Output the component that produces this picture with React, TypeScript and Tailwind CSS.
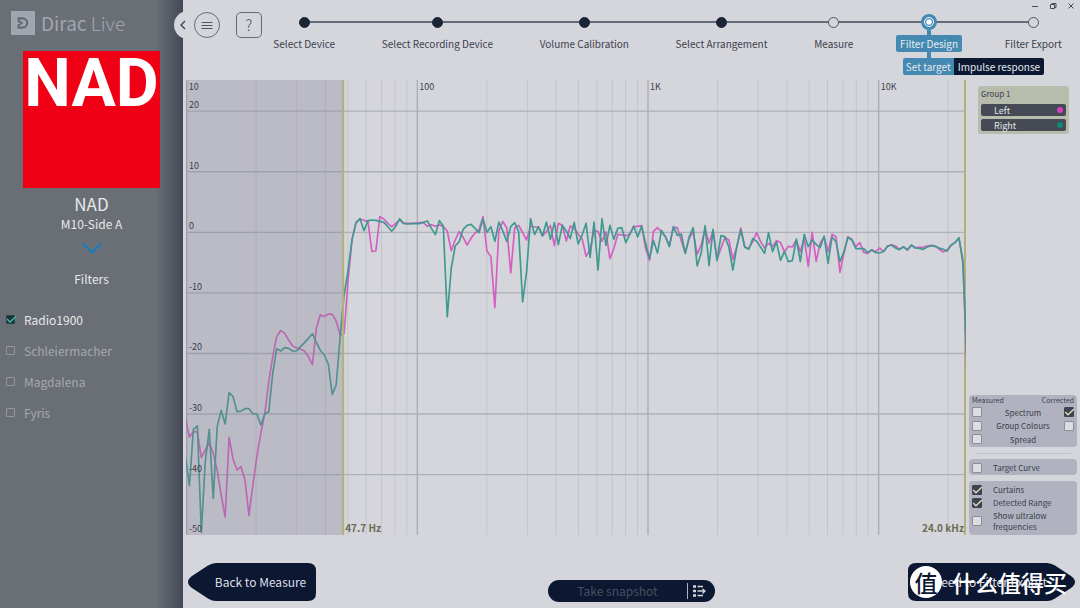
import { clsx } from "clsx"
import { useState } from "react"

const STEPS = [
	{ label: "Select Device", state: "done" },
	{ label: "Select Recording Device", state: "done" },
	{ label: "Volume Calibration", state: "done" },
	{ label: "Select Arrangement", state: "done" },
	{ label: "Measure", state: "open" },
	{ label: "Filter Design", state: "current" },
	{ label: "Filter Export", state: "open" },
]

const FILTERS = ["Radio1900", "Schleiermacher", "Magdalena", "Fyris"]

const CHANNELS = [
	{ label: "Left", dot: "bg-[#d63fc4]" },
	{ label: "Right", dot: "bg-[#0e8a75]" },
]

// Trace samples, evenly spaced on the log frequency axis, in plot units
const LEFT = [
	655, 711, 695, 696, 773, 750, 728, 760, 810, 885, 951, 712, 778, 810, 800,
	840, 946, 855, 770, 700, 640, 545, 470, 410, 391, 400, 420, 437, 444, 448,
	453, 470, 494, 385, 344, 350, 342, 343, 363, 405, 400, 240, 118, 68, 57, 61,
	64, 154, 153, 50, 57, 70, 80, 70, 60, 70, 70, 70, 69, 68, 68, 79, 74, 79,
	74, 80, 93, 152, 120, 95, 112, 135, 115, 99, 90, 50, 153, 170, 323, 92, 64,
	84, 219, 84, 76, 98, 120, 78, 81, 81, 107, 95, 76, 137, 70, 76, 123, 78, 85,
	102, 116, 169, 148, 92, 94, 124, 96, 176, 145, 103, 105, 107, 103, 80, 79,
	77, 145, 181, 94, 83, 96, 110, 136, 82, 83, 122, 160, 115, 96, 163, 135, 88,
	130, 92, 178, 145, 112, 120, 178, 140, 84, 140, 146, 125, 98, 125, 144, 130,
	140, 122, 127, 155, 139, 141, 120, 155, 115, 199, 97, 184, 130, 112, 155,
	103, 110, 217, 160, 110, 118, 140, 128, 157, 160, 149, 155, 144, 155, 138,
	134, 138, 148, 141, 149, 136, 143, 142, 141, 138, 136, 138, 147, 156, 150,
	137, 127, 115, 180, 520,
]

const RIGHT = [
	770, 857, 688, 678, 997, 785, 688, 895, 680, 631, 672, 578, 590, 635, 633,
	626, 626, 641, 642, 675, 642, 635, 520, 446, 453, 443, 445, 453, 453, 440,
	428, 415, 401, 427, 451, 465, 492, 583, 555, 408, 285, 210, 118, 68, 56, 92,
	62, 60, 61, 64, 67, 80, 94, 79, 56, 70, 72, 71, 71, 71, 67, 63, 85, 104, 62,
	78, 351, 205, 138, 125, 88, 76, 73, 85, 98, 57, 97, 80, 124, 66, 93, 124,
	80, 68, 95, 306, 215, 56, 104, 80, 108, 66, 118, 68, 134, 76, 93, 116, 67,
	132, 105, 70, 172, 66, 210, 56, 136, 76, 118, 85, 83, 128, 103, 78, 111, 78,
	130, 175, 122, 159, 91, 110, 140, 80, 106, 102, 160, 110, 83, 198, 160, 77,
	197, 88, 182, 107, 110, 142, 210, 140, 90, 142, 148, 116, 124, 142, 160, 98,
	155, 126, 181, 155, 185, 182, 117, 185, 103, 140, 120, 133, 143, 108, 190,
	111, 125, 185, 155, 112, 120, 146, 146, 146, 158, 150, 158, 159, 154, 139,
	135, 144, 149, 140, 150, 135, 144, 145, 148, 141, 137, 139, 144, 148, 153,
	135, 128, 113, 190, 480,
]

const PLOT_WIDTH = 2340
const PLOT_TOP = -360
const PLOT_HEIGHT = 1365

const freqToX = (freq: number) => 2 + 692 * Math.log10(freq / 10)
const dbToY = (db: number) => 97 - db * 18.17
const toPoints = (trace: number[]) =>
	trace.map((y, i) => `${(i * 11.9 - 1.6).toFixed(1)},${y}`).join(" ")

const leftPct = (freq: number) => `${(freqToX(freq) / PLOT_WIDTH) * 100}%`
const topPct = (db: number) =>
	`${((dbToY(db) - PLOT_TOP) / PLOT_HEIGHT) * 100}%`

const DECADES = [10, 100, 1000, 10000]
const MINOR_FREQS = DECADES.flatMap(d =>
	[2, 3, 4, 5, 6, 7, 8, 9].map(n => n * d)
).filter(f => f <= 20000)
const DB_LINES = [20, 10, 0, -10, -20, -30, -40]
const FREQ_LABELS = [
	{ freq: 10, text: "10" },
	{ freq: 100, text: "100" },
	{ freq: 1000, text: "1K" },
	{ freq: 10000, text: "10K" },
]

const Plot = () => {
	const curtain = freqToX(47.7)
	return (
		<section
			aria-label="Frequency response"
			className="relative h-[455px] min-w-0 flex-1 text-[9px] leading-3 text-[#3b404c]"
		>
			<svg
				viewBox={`0 ${PLOT_TOP} ${PLOT_WIDTH} ${PLOT_HEIGHT}`}
				preserveAspectRatio="none"
				className="block h-full w-full overflow-hidden"
				fill="none"
			>
				{MINOR_FREQS.map(f => (
					<path
						key={f}
						d={`M${freqToX(f)} ${PLOT_TOP}V1005`}
						stroke="#c3c4cb"
						strokeWidth="3"
					/>
				))}
				{DB_LINES.map(db => (
					<path
						key={db}
						d={`M0 ${dbToY(db)}H${PLOT_WIDTH}`}
						stroke="#aeb0bb"
						strokeWidth="4"
					/>
				))}
				{DECADES.map(f => (
					<path
						key={f}
						d={`M${freqToX(f)} ${PLOT_TOP}V1005`}
						stroke="#a9abb6"
						strokeWidth="4"
					/>
				))}
				<path
					d={`M2337 ${PLOT_TOP}V1005`}
					stroke="#b0b277"
					strokeWidth="6"
				/>
				<g strokeWidth="5" strokeLinejoin="round">
					<polyline points={toPoints(LEFT)} stroke="#d45fc0" />
					<polyline points={toPoints(RIGHT)} stroke="#3f998f" />
				</g>
				<rect
					y={PLOT_TOP}
					width={curtain}
					height={PLOT_HEIGHT}
					fill="#827f93"
					fillOpacity="0.3"
				/>
				<path
					d={`M${curtain} ${PLOT_TOP}V1005`}
					stroke="#b0b277"
					strokeWidth="6"
				/>
			</svg>
			{FREQ_LABELS.map(({ freq, text }) => (
				<span
					key={freq}
					className="absolute top-px ml-[2px]"
					style={{ left: leftPct(freq) }}
				>
					{text}
				</span>
			))}
			{[...DB_LINES, -50].map(db => (
				<span
					key={db}
					className="absolute left-[3px] -translate-y-full"
					style={{ top: topPct(db) }}
				>
					{db}
				</span>
			))}
			<span
				className="absolute bottom-0 ml-0.5 text-[10px] leading-3.5 font-bold text-[#6a6b52]"
				style={{ left: leftPct(47.7) }}
			>
				47.7 Hz
			</span>
			<span className="absolute right-0.5 bottom-0 text-[10px] leading-3.5 font-bold text-[#6a6b52]">
				24.0 kHz
			</span>
		</section>
	)
}

interface ICheck {
	label: string
	defaultChecked?: boolean
}

const Check: React.FC<ICheck> = ({ label, defaultChecked }) => (
	<span className="relative block size-[10px] shrink-0">
		<input
			type="checkbox"
			aria-label={label}
			defaultChecked={defaultChecked}
			className="peer block size-[10px] appearance-none rounded-[1px] border border-[#8b8e98] bg-[#dcdde1] checked:border-[#3f4350] checked:bg-[#3f4350]"
		/>
		<svg
			viewBox="0 0 10 10"
			className="pointer-events-none absolute inset-0 hidden size-[10px] overflow-visible peer-checked:block"
			fill="none"
			stroke="#e4dfc0"
			strokeWidth="1.3"
		>
			<path d="M1.2 5 4 7.8 10 2" />
		</svg>
	</span>
)

const OptionRow: React.FC<ICheck> = ({ label, defaultChecked }) => (
	<div className="flex items-center gap-[11px]">
		<Check label={label} defaultChecked={defaultChecked} />
		<span className="w-16">{label}</span>
	</div>
)

const SidePanel = () => (
	<aside className="mr-[3px] ml-[3px] flex w-[108px] shrink-0 flex-col text-[8px] leading-[11px] text-[#3b404c]">
		<div className="mt-1.5 mr-2 ml-[9px] rounded-[3px] bg-[#b8bcac] px-[3px] pt-[2px] pb-[3px]">
			<h2 className="mb-[5px]">Group 1</h2>
			<ul className="flex flex-col gap-[3px]">
				{CHANNELS.map(c => (
					<li
						key={c.label}
						className="flex h-3 items-center justify-between rounded-[2px] bg-[#454a55] pr-[3px] pl-[13px] text-[9px] text-[#e2e3e6]"
					>
						{c.label}
						<span className={clsx("size-1.5 rounded-full", c.dot)} />
					</li>
				))}
			</ul>
		</div>
		<div className="mt-auto rounded-[4px] bg-[#b0b3bf] px-[3px] pb-px">
			<div className="flex justify-between text-[7px] leading-[10px]">
				<span>Measured</span>
				<span>Corrected</span>
			</div>
			<div className="flex h-[14px] items-center justify-between">
				<Check label="Measured spectrum" />
				Spectrum
				<Check label="Corrected spectrum" defaultChecked />
			</div>
			<div className="flex h-[13px] items-center justify-between">
				<Check label="Measured group colours" />
				Group Colours
				<Check label="Corrected group colours" />
			</div>
			<div className="flex h-[14px] items-center justify-between">
				<Check label="Measured spread" />
				Spread
				<span className="w-[10px]" />
			</div>
		</div>
		<hr className="mx-1.5 mt-1.5 mb-[5px] border-[#bfc1ca]" />
		<div className="rounded-[4px] bg-[#b0b3bf] px-[3px] pt-[3px] pb-[2px]">
			<OptionRow label="Target Curve" />
		</div>
		<div className="mt-1.5 flex flex-col gap-[2px] rounded-[4px] bg-[#b0b3bf] px-[3px] py-[3px]">
			<OptionRow label="Curtains" defaultChecked />
			<OptionRow label="Detected Range" defaultChecked />
			<OptionRow label="Show ultralow frequencies" />
		</div>
	</aside>
)

const Sidebar = () => {
	const [selected, setSelected] = useState("Radio1900")
	return (
		<aside className="w-[183px] shrink-0 bg-[#6a6e75] bg-linear-to-r from-transparent from-85% to-[#434856] pt-[11px] text-[#e8e9eb]">
			<div className="ml-[11px] flex h-6 items-center gap-1.5 text-[#a1a5b0]">
				<svg viewBox="0 0 24 24" className="size-6">
					<path d="M0 0h24v24H0z" fill="#a1a5b0" />
					<path
						d="M6.5 7.3H11.500a4.700 4.700 0 0 1 0 9.400H6.500M7.700 8v2.200L10.500 12 7.700 13.800V16"
						fill="none"
						stroke="#666a73"
						strokeWidth="2.200"
					/>
				</svg>
				<span className="text-[19px] leading-6">
					Dirac <span className="font-light">Live</span>
				</span>
			</div>
			<div className="mx-[23px] mt-4 flex h-[137px] justify-center bg-[#f00015] font-[Roboto,sans-serif] text-[66px] leading-[66px] font-bold text-white">
				NAD
			</div>
			<div className="text-center">
				<h1 className="mt-1 text-[17px] leading-[23px]">NAD</h1>
				<p className="text-[12px] leading-[18px]">M10-Side A</p>
				<button
					type="button"
					aria-label="Show devices"
					className="mx-auto mt-[9px] block"
				>
					<svg viewBox="0 0 20 12" className="h-3 w-5">
						<path
							d="M1 1.500 10 10.500 19 1.500"
							fill="none"
							stroke="#0f7fbf"
							strokeWidth="2"
						/>
					</svg>
				</button>
				<h2 className="mt-4 text-[12px] leading-[18px]">Filters</h2>
			</div>
			<ul className="mt-4">
				{FILTERS.map(name => (
					<li key={name} className="h-[31px]">
						<label
							className={clsx(
								"flex h-[31px] items-center gap-2 pl-1.5 text-[12px] leading-5",
								name === selected
									? "text-[#e8e9eb]"
									: "text-[#a5a8b0]"
							)}
						>
							<span className="relative block size-[10px]">
								<input
									type="checkbox"
									checked={name === selected}
									onChange={() => setSelected(name)}
									className="peer block size-[9px] appearance-none rounded-[1px] border border-[#9497a0] checked:border-[#1f4a50] checked:bg-[#20303c]"
								/>
								<svg
									viewBox="0 0 10 10"
									className="pointer-events-none absolute inset-0 hidden size-[10px] overflow-visible peer-checked:block"
									fill="none"
									stroke="#43c0a0"
									strokeWidth="1.300"
								>
									<path d="M1 4 4 7 10 1.500" />
								</svg>
							</span>
							{name}
						</label>
					</li>
				))}
			</ul>
		</aside>
	)
}

const StepDot = ({ state }: { state: string }) => {
	if (state === "current")
		return (
			<svg viewBox="0 0 16 16" className="relative size-4">
				<circle cx="8" cy="8" r="8" fill="#4489b1" />
				<circle cx="8" cy="8" r="4.500" fill="none" stroke="#fff" />
				<circle cx="8" cy="8" r="2.800" fill="#fff" />
			</svg>
		)
	return (
		<span
			className={clsx(
				"relative size-[11px] rounded-full border",
				state === "done"
					? "border-[#1c2536] bg-[#1c2536]"
					: "border-[#50555f] bg-[#d5d6dc]"
			)}
		/>
	)
}

const Stepper = () => (
	<nav aria-label="Progress" className="ml-[11px] flex-1 pt-[14px]">
		<ol className="flex gap-[46px] text-[10px] leading-[17px] whitespace-nowrap">
			{STEPS.map((step, idx) => (
				<li
					key={step.label}
					className="relative flex flex-auto flex-col items-center"
				>
					<span
						className={clsx(
							"absolute top-[7px] h-0.5 bg-[#666c77]",
							idx === 0 ? "left-1/2" : "-left-[23px]",
							idx === STEPS.length - 1
								? "right-1/2"
								: "-right-[23px]"
						)}
					/>
					<span className="flex h-4 items-center">
						<StepDot state={step.state} />
					</span>
					{step.state === "current" ? (
						<>
							<span className="h-[5px] w-1 bg-[#4489b1]" />
							<button
								type="button"
								className="-mx-1 block rounded-[2px] bg-[#4489b1] px-1 text-[#e8edf2]"
							>
								{step.label}
							</button>
							<span className="h-1.5 w-1 bg-[#4489b1]" />
							<div className="absolute top-[44px] left-[3px] flex text-[#e4e8ee]">
								<button
									type="button"
									className="rounded-l-[2px] bg-[#4489b1] px-[3px]"
								>
									Set target
								</button>
								<button
									type="button"
									className="rounded-r-[2px] bg-[#0c1831] px-1"
								>
									Impulse response
								</button>
							</div>
						</>
					) : (
						<button type="button" className="mt-[5px] block">
							{step.label}
						</button>
					)}
				</li>
			))}
		</ol>
	</nav>
)

const WindowControls = () => (
	<div className="absolute top-0.5 right-[5px] flex gap-[10px] text-[#454a55]">
		<button type="button" aria-label="Minimize">
			<svg viewBox="0 0 8 8" className="size-2" stroke="currentColor">
				<path d="M1 4.500h6" />
			</svg>
		</button>
		<button type="button" aria-label="Restore">
			<svg
				viewBox="0 0 8 8"
				className="size-2"
				fill="none"
				stroke="currentColor"
			>
				<path d="M1.500 2.500h4v4h-4zM3 2.500v-1h4v4H5.500" />
			</svg>
		</button>
		<button type="button" aria-label="Close">
			<svg viewBox="0 0 8 8" className="size-2" stroke="currentColor">
				<path d="m1.500 1.500 5 5m0-5-5 5" />
			</svg>
		</button>
	</div>
)

const Header = () => (
	<header className="relative flex h-20 items-start text-[#3b404c]">
		<button
			type="button"
			aria-label="Collapse sidebar"
			className="absolute top-[11px] -left-[9px] h-7 w-5 rounded-l-full bg-[#d5d6dc]"
		>
			<svg
				viewBox="0 0 6 10"
				className="ml-1.5 h-[10px] w-1.5"
				fill="none"
				stroke="#3b404c"
				strokeWidth="1.300"
			>
				<path d="M5 1 1 5l4 4" />
			</svg>
		</button>
		<button
			type="button"
			aria-label="Menu"
			className="relative mt-3 ml-[11px] flex size-[26px] shrink-0 items-center justify-center rounded-full border border-[#666a75]"
		>
			<svg
				viewBox="0 0 12 9"
				className="h-[9px] w-3"
				stroke="#4f5764"
				strokeWidth="1"
			>
				<path d="M0.500 1.500h11M.5 4.500h11M.5 7.500h11" />
			</svg>
		</button>
		<button
			type="button"
			aria-label="Help"
			className="mt-3 ml-4 flex size-[26px] shrink-0 items-center justify-center rounded-[5px] border border-[#666a75] text-[15px] leading-5 font-light"
		>
			?
		</button>
		<Stepper />
		<div className="w-[18px] shrink-0" />
		<WindowControls />
	</header>
)

const Footer = () => (
	<footer className="mt-7 mr-[5px] ml-[5px] grid grid-cols-[1fr_auto_1fr] items-start text-[12px] leading-5 text-[#dcdfe6]">
		<button
			type="button"
			className="relative h-[38px] w-32 justify-self-start pl-[17px]"
		>
			<svg
				viewBox="0 0 128 38"
				className="absolute inset-0 h-full w-full"
				fill="#0c1831"
			>
				<path d="M28 0H120Q128 0 128 8V30Q128 38 120 38H28Q24 38 20 35.500L4 25Q-4 19 4 13L20 2.500Q24 0 28 0Z" />
			</svg>
			<span className="relative">Back to Measure</span>
		</button>
		<div className="mt-[17px] flex h-[22px] w-[167px] items-center rounded-full bg-[#0c1831]">
			<button
				type="button"
				disabled
				className="flex-1 text-center text-[#474f60]"
			>
				Take snapshot
			</button>
			<span className="h-4 w-px bg-[#aeb3be]" />
			<button
				type="button"
				aria-label="Snapshot list"
				className="mr-[9px] ml-[5px]"
			>
				<svg
					viewBox="0 0 13 12"
					className="h-3 w-[13px]"
					fill="none"
					stroke="#d5d6dc"
					strokeWidth="1.300"
				>
					<path d="M0 1.500h3M0 6h3M0 10.500h3" strokeWidth="2.500" />
					<path d="M4.500 1.500H10M4.500 6H11.500M4.500 10.500H10M9.500 4 12 6 9.500 8.500" />
				</svg>
			</button>
		</div>
		<button
			type="button"
			className="relative h-[38px] w-[167px] justify-self-end pr-5"
		>
			<svg
				viewBox="0 0 167 38"
				className="absolute inset-0 h-full w-full"
				fill="#0c1831"
			>
				<path d="M139 0H8Q0 0 0 8V30Q0 38 8 38H139Q143 38 147 35.500L163 25Q171 19 163 13L147 2.500Q143 0 139 0Z" />
			</svg>
			<span className="relative">Proceed to Filter Export</span>
		</button>
	</footer>
)

const Watermark = () => (
	<div className="pointer-events-none absolute right-[13px] bottom-[10px] flex items-center gap-[10px] text-white">
		<span className="flex size-8 items-center justify-center rounded-full bg-white text-[23px] leading-8 font-medium text-[#0c1831]">
			值
		</span>
		<span className="text-[23px] leading-8 font-medium">什么值得买</span>
	</div>
)

const App = () => (
	<div className="relative flex min-h-screen overflow-hidden bg-[#d5d6dc] font-['Noto_Sans_CJK_SC',sans-serif]">
		<Sidebar />
		<main className="flex min-w-0 flex-1 flex-col">
			<Header />
			<div className="flex pl-[3px]">
				<Plot />
				<SidePanel />
			</div>
			<Footer />
		</main>
		<Watermark />
	</div>
)

export default App
